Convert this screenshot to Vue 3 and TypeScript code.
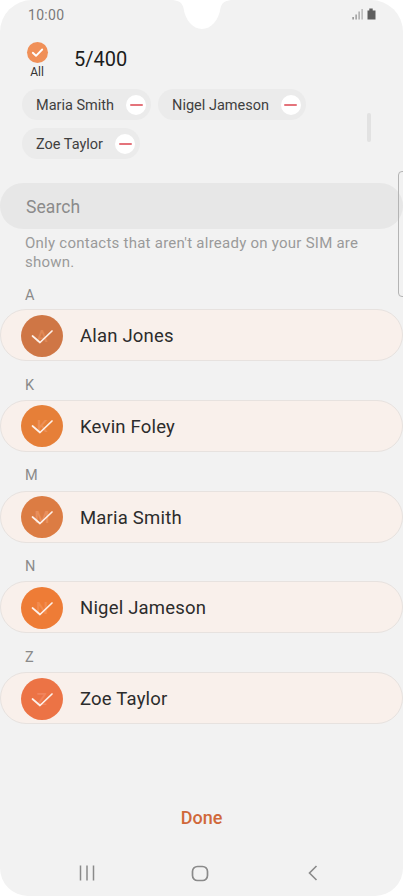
<script setup lang="ts">
const chips = ['Maria Smith', 'Nigel Jameson', 'Zoe Taylor']
const contacts = [
  { letter: 'A', name: 'Alan Jones', color: '#cf7645', ghost: '#e08856' },
  { letter: 'K', name: 'Kevin Foley', color: '#e67f38', ghost: '#ed9057' },
  { letter: 'M', name: 'Maria Smith', color: '#dc7c43', ghost: '#e98f5c' },
  { letter: 'N', name: 'Nigel Jameson', color: '#ee7c36', ghost: '#f38c4e' },
  { letter: 'Z', name: 'Zoe Taylor', color: '#ec7345', ghost: '#f1845c' },
]
</script>

<template>
  <div class="screen">
    <svg class="notch" width="64" height="30" viewBox="0 0 64 30" aria-hidden="true">
      <path d="M0 0C8 0 12 2 13.500 8C15 20 23 29 32 29C41 29 49 20 50.500 8C52 2 56 0 64 0Z" fill="#fff" />
    </svg>
    <div class="side-handle"></div>

    <div class="status">
      <span class="time">10:00</span>
      <svg width="25" height="13" viewBox="0 0 25 13" aria-hidden="true">
        <rect x="0.500" y="9" width="1.200" height="2.500" fill="#777" />
        <rect x="3.500" y="6.500" width="1.200" height="5" fill="#888" />
        <rect x="6.500" y="3.500" width="1.200" height="8" fill="#999" />
        <rect x="9.500" y="1" width="1.200" height="10.500" fill="#aaa" />
        <path d="M15.500 2.500H17.300V0.500H20.700V2.500H23.500V11.500H15.500Z" fill="#5e5e5e" />
      </svg>
    </div>

    <div class="header">
      <div class="all">
        <span class="all-check">
          <svg width="21" height="21" viewBox="0 0 21 21" aria-hidden="true">
            <path d="M5.800 10.800L9 13.800L15.200 7.500" fill="none" stroke="#fff" stroke-width="1.900" stroke-linecap="round" stroke-linejoin="round" />
          </svg>
        </span>
        <span class="all-label">All</span>
      </div>
      <span class="count">5/400</span>
    </div>

    <div class="chips-wrap">
      <div class="chips">
        <div v-for="chip in chips" :key="chip" class="chip">
          <span class="chip-text">{{ chip }}</span>
          <span class="minus"><i></i></span>
        </div>
      </div>
      <div class="scrollbar"></div>
    </div>

    <div class="search">Search</div>
    <p class="hint">Only contacts that aren't already on your SIM are shown.</p>

    <section v-for="c in contacts" :key="c.name" class="group">
      <div class="letter">{{ c.letter }}</div>
      <div class="row">
        <span class="avatar" :style="{ background: c.color }">
          <span class="ghost" :style="{ color: c.ghost }">{{ c.letter }}</span>
          <svg class="tick" width="42" height="42" viewBox="0 0 42 42" aria-hidden="true">
            <path d="M11.500 21L19 27.500L31 16" fill="none" stroke="#fdf1ea" stroke-width="1.700" stroke-linecap="round" stroke-linejoin="round" />
          </svg>
        </span>
        <span class="name">{{ c.name }}</span>
      </div>
    </section>

    <div class="spacer"></div>
    <div class="done">Done</div>

    <nav class="nav">
      <svg width="16" height="16" viewBox="0 0 16 16" aria-hidden="true">
        <path d="M1.500 0.500V15.500M8 0.500V15.500M14.500 0.500V15.500" stroke="#8a8a8a" stroke-width="1.500" fill="none" />
      </svg>
      <svg width="18" height="17" viewBox="0 0 18 17" aria-hidden="true">
        <rect x="1.500" y="1.500" width="15" height="14" rx="5" stroke="#8a8a8a" stroke-width="1.700" fill="none" />
      </svg>
      <svg width="13" height="16" viewBox="0 0 13 16" aria-hidden="true">
        <path d="M11.500 1L4.500 8L11.500 15" stroke="#8a8a8a" stroke-width="1.600" fill="none" />
      </svg>
    </nav>
  </div>
</template>

<style scoped>
.screen {
  position: relative;
  width: 403px;
  height: 896px;
  overflow: hidden;
  display: flex;
  flex-direction: column;
  background: #f2f2f2;
  border-radius: 32px 32px 28px 28px;
  font-family: Roboto, "Liberation Sans", sans-serif;
  color: #2b2b2b;
}
.notch {
  position: absolute;
  top: 0;
  left: 170px;
}
.side-handle {
  position: absolute;
  top: 171px;
  right: -4px;
  width: 9px;
  height: 126px;
  box-sizing: border-box;
  border: 1px solid #b4b4b4;
  border-radius: 4px;
}
.status {
  height: 31px;
  box-sizing: border-box;
  padding: 6px 26px 0 28px;
  display: flex;
  justify-content: space-between;
  align-items: flex-start;
}
.time {
  font-size: 14px;
  line-height: 18px;
  color: #7a7a7a;
  letter-spacing: 0.3px;
}
.status svg {
  margin-top: 2px;
}
.header {
  height: 50px;
  padding: 11px 0 0 24px;
  box-sizing: border-box;
  display: flex;
  align-items: flex-start;
}
.all {
  width: 26px;
  display: flex;
  flex-direction: column;
  align-items: center;
}
.all-check {
  width: 21px;
  height: 21px;
  border-radius: 50%;
  background: #f09058;
}
.all-check svg {
  display: block;
}
.all-label {
  font-size: 12px;
  line-height: 14px;
  margin-top: 2px;
  color: #333;
}
.count {
  margin: 5px 0 0 24px;
  font-size: 20px;
  line-height: 24px;
  color: #1c1c1c;
}
.chips-wrap {
  position: relative;
  height: 102px;
  padding: 8px 0 0 22px;
  box-sizing: border-box;
}
.chips {
  display: flex;
  flex-wrap: wrap;
  gap: 8px 7px;
  width: 330px;
}
.chip {
  height: 31px;
  display: flex;
  align-items: center;
  gap: 12px;
  padding: 0 5px 0 14px;
  border-radius: 16px;
  background: #ebebeb;
  font-size: 14.500px;
  color: #3f3f3f;
}
.chip-text {
  padding-top: 2px;
}
.minus {
  width: 20px;
  height: 20px;
  border-radius: 50%;
  background: #fff;
  display: flex;
  align-items: center;
  justify-content: center;
}
.minus i {
  width: 13px;
  height: 2px;
  border-radius: 1px;
  background: #e4737b;
}
.scrollbar {
  position: absolute;
  top: 32px;
  left: 367px;
  width: 4px;
  height: 29px;
  border-radius: 2px;
  background: #e2e2e2;
}
.search {
  height: 46px;
  padding-left: 26px;
  border-radius: 23px;
  background: #e7e7e7;
  color: #8b8b8b;
  font-size: 17.500px;
  line-height: 48px;
  letter-spacing: 0.1px;
}
.hint {
  margin: 5px 30px 0 25px;
  font-size: 15px;
  line-height: 18.500px;
  color: #9a9a9a;
  letter-spacing: 0.25px;
}
.group {
  display: flex;
  flex-direction: column;
}
.letter {
  height: 38.750px;
  box-sizing: border-box;
  padding: 14.500px 0 0 25px;
  font-size: 14.500px;
  line-height: 20px;
  color: #8a8a8a;
}
.group:first-of-type .letter {
  height: 38px;
}
.row {
  height: 52px;
  box-sizing: border-box;
  display: flex;
  align-items: center;
  gap: 17px;
  padding: 1px 0 0 20px;
  border: 1px solid #e7e2df;
  border-radius: 26px;
  background: #f9f0eb;
}
.avatar {
  position: relative;
  width: 42px;
  height: 42px;
  flex: none;
  border-radius: 50%;
  display: flex;
  align-items: center;
  justify-content: center;
}
.ghost {
  font-size: 17px;
  font-weight: 500;
}
.tick {
  position: absolute;
  inset: 0;
}
.name {
  margin-top: 1px;
  font-size: 18.500px;
  color: #2c2c2c;
  letter-spacing: 0.2px;
}
.spacer {
  flex: 1;
}
.done {
  text-align: center;
  font-size: 18px;
  line-height: 22px;
  font-weight: 500;
  color: #d0683a;
  margin-bottom: 25px;
}
.nav {
  height: 35px;
  box-sizing: border-box;
  padding: 11px 0 0 79px;
  margin-bottom: 7px;
  display: flex;
  gap: 96px;
  align-items: flex-start;
}
</style>

<style>
html,
body {
  background: #fff;
}
</style>
